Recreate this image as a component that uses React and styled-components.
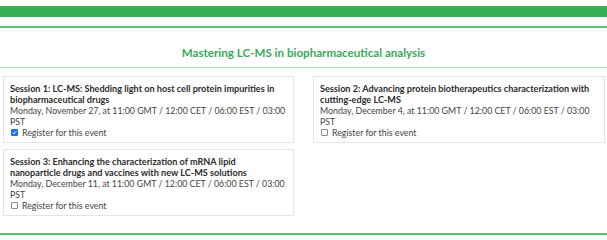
import React, { useState } from "react";
import styled, { createGlobalStyle } from "styled-components";

const GlobalStyle = createGlobalStyle`
  body {
    margin: 0;
    background: #fff;
    font-family: Lato, "Open Sans", sans-serif;
    color: #333;
  }
`;

const sessions = [
  {
    id: 1,
    title: "Session 1: LC-MS: Shedding light on host cell protein impurities in biopharmaceutical drugs",
    date: "Monday, November 27, at 11:00 GMT / 12:00 CET / 06:00 EST / 03:00 PST",
    checked: true,
  },
  {
    id: 2,
    title: "Session 2: Advancing protein biotherapeutics characterization with cutting-edge LC-MS",
    date: "Monday, December 4, at 11:00 GMT / 12:00 CET / 06:00 EST / 03:00 PST",
    checked: false,
  },
  {
    id: 3,
    title: "Session 3: Enhancing the characterization of mRNA lipid nanoparticle drugs and vaccines with new LC-MS solutions",
    date: "Monday, December 11, at 11:00 GMT / 12:00 CET / 06:00 EST / 03:00 PST",
    checked: false,
  },
];

const SessionCard = ({ session }) => {
  const [checked, setChecked] = useState(session.checked);

  return (
    <Card>
      <CardTitle>{session.title}</CardTitle>
      <CardDate>{session.date}</CardDate>
      <Register onClick={() => setChecked(!checked)}>
        <Box $checked={checked}>
          {checked && (
            <svg width="5" height="5" viewBox="0 0 8 8">
              <path d="M1.2 4.2l1.9 1.8L6.8 2" fill="none" stroke="#fff" strokeWidth="1.6" />
            </svg>
          )}
        </Box>
        Register for this event
      </Register>
    </Card>
  );
};

const App = () => {
  return (
    <>
      <GlobalStyle />
      <Wrapper>
        <TopBar />
        <ThinRule />
        <Heading>Mastering LC-MS in biopharmaceutical analysis</Heading>
        <Grid>
          {sessions.map((s) => (
            <SessionCard key={s.id} session={s} />
          ))}
        </Grid>
        <BottomRule />
      </Wrapper>
    </>
  );
};

const Wrapper = styled.main`
  width: 607px;
  height: 240px;
  overflow: hidden;
  padding-top: 6px;
  box-sizing: border-box;
`;

const TopBar = styled.div`
  height: 11px;
  background: #36b056;
`;

const ThinRule = styled.div`
  height: 2px;
  margin-top: 9px;
  background: #5cbf72;
`;

const Heading = styled.h2`
  margin: 0;
  padding: 18px 0 7px;
  line-height: 14px;
  text-align: center;
  font-size: 11.6px;
  font-weight: 700;
  color: #3aa957;
  border-bottom: 1px solid #a6dcb2;
`;

const Grid = styled.section`
  display: grid;
  grid-template-columns: 291px 292px;
  column-gap: 19px;
  row-gap: 6px;
  align-items: start;
  padding: 8px 2px 0 3px;
`;

const Card = styled.div`
  border: 1px solid #e4e4e4;
  padding: 6px 7px 4px 6px;
  font-size: 8.8px;
  line-height: 11px;
`;

const CardTitle = styled.div`
  font-weight: 700;
  font-size: 9.1px;
  color: #2b2b2b;
`;

const CardDate = styled.div`
  color: #444;
`;

const Register = styled.label`
  display: flex;
  align-items: center;
  gap: 4px;
  color: #444;
  cursor: pointer;
`;

const Box = styled.span`
  display: inline-flex;
  align-items: center;
  justify-content: center;
  width: 7px;
  height: 7px;
  margin-left: 1px;
  box-sizing: border-box;
  border: 1px solid ${(p) => (p.$checked ? "#1a73e8" : "#8a8a8a")};
  border-radius: 1px;
  background: ${(p) => (p.$checked ? "#1a73e8" : "#fff")};
`;

const BottomRule = styled.div`
  height: 2px;
  margin-top: 17px;
  background: #5cbf72;
`;

export default App;
